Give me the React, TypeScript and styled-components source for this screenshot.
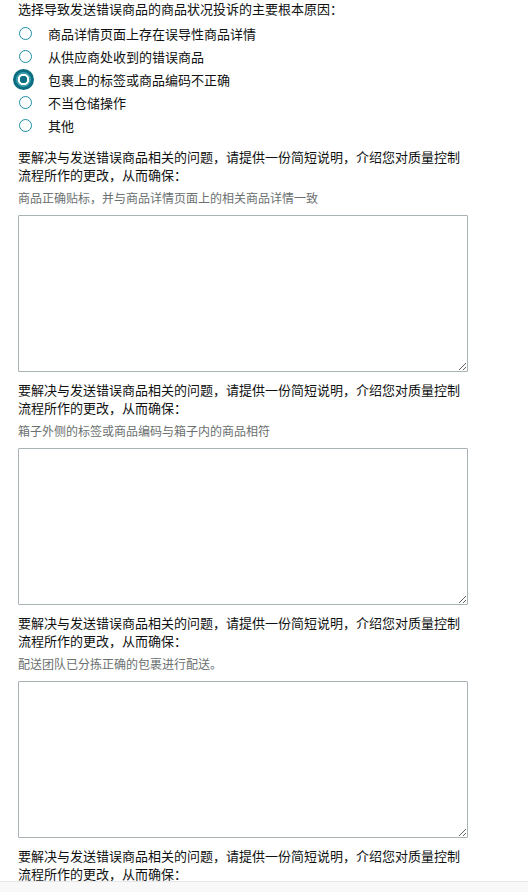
import React from 'react'
import styled, { createGlobalStyle } from 'styled-components'

const GlobalStyle = createGlobalStyle`
	html, body {
		margin: 0;
		padding: 0;
		background: #fff;
	}
	body {
		font-family: 'Noto Sans CJK SC', 'Noto Sans', sans-serif;
		color: #0f1111;
	}
`

const reasons = [
	'商品详情页面上存在误导性商品详情',
	'从供应商处收到的错误商品',
	'包裹上的标签或商品编码不正确',
	'不当仓储操作',
	'其他',
]

const hints = [
	'商品正确贴标，并与商品详情页面上的相关商品详情一致',
	'箱子外侧的标签或商品编码与箱子内的商品相符',
	'配送团队已分拣正确的包裹进行配送。',
	'',
]

const PROMPT = '要解决与发送错误商品相关的问题，请提供一份简短说明，介绍您对质量控制流程所作的更改，从而确保：'

//=> DOM
export default function App() {
	const selected = 2

	return (
		<>
			<GlobalStyle />
			<Page>
				<Question>选择导致发送错误商品的商品状况投诉的主要根本原因：</Question>
				<RadioList>
					{reasons.map((r, i) => (
						<RadioRow key={r}>
							<RadioSlot>
								<Radio $checked={i === selected} />
							</RadioSlot>
							<RadioLabel>{r}</RadioLabel>
						</RadioRow>
					))}
				</RadioList>
				{hints.map((h, i) => (
					<Field key={i}>
						<Prompt>{PROMPT}</Prompt>
						{h && <Hint>{h}</Hint>}
						{h && <TextBox />}
					</Field>
				))}
			</Page>
			<BottomBar />
		</>
	)
}

//=> Style
const Page = styled.main`
	padding: 0 0 0 18px;
	width: 450px;
`

const Question = styled.div`
	font-size: 13px;
	line-height: 14px;
	padding-top: 2px;
`

const RadioList = styled.div`
	display: flex;
	flex-direction: column;
	margin-top: 6px;
`

const RadioRow = styled.label`
	display: flex;
	align-items: center;
	height: 23px;
`

const RadioSlot = styled.span`
	width: 14px;
	height: 14px;
	flex: none;
	display: flex;
	align-items: center;
	justify-content: center;
`

const Radio = styled.span<{ $checked: boolean }>`
	box-sizing: border-box;
	display: block;
	flex: none;
	border-radius: 50%;
	width: ${(p) => (p.$checked ? '21px' : '13px')};
	height: ${(p) => (p.$checked ? '21px' : '13px')};
	margin-left: ${(p) => (p.$checked ? '-4px' : '0')};
	border: ${(p) => (p.$checked ? '3px solid #0b6e80' : '1px solid #1a8fa3')};
	background: ${(p) =>
		p.$checked ? 'radial-gradient(circle, #0a6f82 0 3.5px, #fff 4px 5.5px, #3d9fb0 6px 8px)' : '#fff'};
`

const RadioLabel = styled.span`
	font-size: 13px;
	line-height: 16px;
	margin-left: 16px;
`

const Field = styled.section`
	display: flex;
	flex-direction: column;
	margin-top: 11px;
	& + & {
		margin-top: 9px;
	}
`

const Prompt = styled.div`
	font-size: 13px;
	line-height: 18px;
`

const Hint = styled.div`
	font-size: 12px;
	line-height: 16px;
	color: #6b7070;
	margin-top: 6px;
`

const TextBox = styled.textarea`
	box-sizing: border-box;
	width: 450px;
	height: 157px;
	margin-top: 9px;
	border: 1px solid #a9b2b5;
	border-radius: 1px;
	outline: none;
	padding: 4px;
	font-family: inherit;
	resize: vertical;
`

const BottomBar = styled.div`
	position: fixed;
	left: 0;
	right: 0;
	bottom: 0;
	height: 10px;
	background: #f8f8f8;
	border-top: 1px solid #e6e6e6;
`
